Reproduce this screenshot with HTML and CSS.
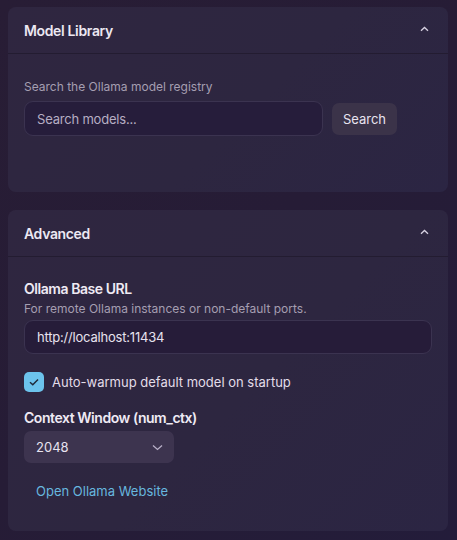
FILE: index.html
```html
<!DOCTYPE html>
<html lang="en">

<head>
    <meta charset="UTF-8">
    <title>Settings</title>
    <link rel="stylesheet" href="styles.css">
</head>

<body>
    <div class="panel">
        <section class="card">
            <div class="card-head">
                <h2>Model Library</h2>
                <svg class="chev" width="9" height="6" viewBox="0 0 9 6"><path d="M1 4.8L4.5 1.5L8 4.8" fill="none" stroke="#d8d2e2" stroke-width="1.3"/></svg>
            </div>
            <div class="card-body lib">
                <p class="hint">Search the Ollama model registry</p>
                <div class="search-row">
                    <input class="field" type="text" placeholder="Search models...">
                    <button class="btn">Search</button>
                </div>
            </div>
        </section>

        <section class="card">
            <div class="card-head">
                <h2>Advanced</h2>
                <svg class="chev" width="9" height="6" viewBox="0 0 9 6"><path d="M1 4.8L4.5 1.5L8 4.8" fill="none" stroke="#d8d2e2" stroke-width="1.3"/></svg>
            </div>
            <div class="card-body adv">
                <div class="group">
                    <label class="label">Ollama Base URL</label>
                    <p class="desc">For remote Ollama instances or non-default ports.</p>
                    <input class="field url" type="text" value="http://localhost:11434">
                </div>
                <label class="check">
                    <span class="box">
                        <svg width="12" height="10" viewBox="0 0 12 10"><path d="M2 5.2L4.8 7.8L10 2.4" fill="none" stroke="#1f2a3a" stroke-width="1.5"/></svg>
                    </span>
                    Auto-warmup default model on startup
                </label>
                <div class="group">
                    <label class="label">Context Window (num_ctx)</label>
                    <div class="select">
                        <span>2048</span>
                        <svg width="11" height="7" viewBox="0 0 11 7"><path d="M1 1.5L5.5 5.5L10 1.5" fill="none" stroke="#b9b0c8" stroke-width="1.3"/></svg>
                    </div>
                </div>
                <a class="link" href="#">Open Ollama Website</a>
            </div>
        </section>
    </div>
</body>

</html>
```

FILE: styles.css
```css
* {
    padding: 0;
    margin: 0;
    box-sizing: border-box;
}

body {
    width: 457px;
    height: 540px;
    overflow: hidden;
    background: linear-gradient(135deg, #281d35 0%, #261c36 50%, #231c3a 100%);
    font-family: Inter, "Noto Sans", sans-serif;
    color: #e9e4f0;
}

.panel {
    padding: 7px 9px 0 8px;
    display: flex;
    flex-direction: column;
    gap: 18px;
}

.card {
    background: linear-gradient(135deg, #2f2640 0%, #2d2640 55%, #2b2543 100%);
    border-radius: 8px;
}

.card-head {
    height: 47px;
    padding: 0 19px 0 16px;
    display: flex;
    align-items: center;
    justify-content: space-between;
    border-bottom: 1px solid #231c31;
}

.card-head h2 {
    font-size: 14px;
    font-weight: 600;
    letter-spacing: -0.35px;
    color: #ece8f2;
}

.chev {
    margin-top: -2px;
}

.card-body {
    padding: 0 16px;
}

.lib {
    padding-top: 25px;
    height: 138px;
}

.hint {
    font-size: 12px;
    color: #a59eb1;
    line-height: 16px;
}

.search-row {
    margin-top: 6px;
    display: flex;
    align-items: center;
    gap: 9px;
}

.field {
    height: 35px;
    border: 1px solid #3b3350;
    border-radius: 9px;
    background: #261d3b;
    padding: 0 12px;
    font-family: inherit;
    font-size: 13px;
    letter-spacing: -0.2px;
    color: #e7e2ee;
    outline: none;
}

.field::placeholder {
    color: #b6aec3;
}

.search-row .field {
    width: 299px;
}

.btn {
    height: 32px;
    width: 65px;
    border: 0;
    border-radius: 7px;
    background: #3b3349;
    color: #e8e3ef;
    font-family: inherit;
    font-size: 13px;
}

.adv {
    padding-top: 23px;
    padding-bottom: 32px;
}

.group {
    display: flex;
    flex-direction: column;
}

.label {
    font-size: 14px;
    font-weight: 600;
    letter-spacing: -0.45px;
    color: #efeaf4;
    line-height: 18px;
}

.desc {
    font-size: 12px;
    color: #a59eb1;
    line-height: 16px;
    margin-top: 3px;
}

.field.url {
    width: 408px;
    height: 34px;
    margin-top: 3px;
    background: #261c39;
}

.check {
    display: flex;
    align-items: center;
    gap: 8px;
    font-size: 13px;
    color: #e3dde9;
    margin: 18px 0 17px;
}

.box {
    width: 20px;
    height: 20px;
    border-radius: 5px;
    background: #6cc3ec;
    display: flex;
    align-items: center;
    justify-content: center;
}

.select {
    margin-top: 4px;
    width: 150px;
    height: 32px;
    border-radius: 7px;
    background: #3d344f;
    display: flex;
    align-items: center;
    justify-content: space-between;
    padding: 0 11px 0 12px;
    font-size: 13px;
    color: #e8e3ef;
}

.link {
    display: block;
    margin: 20px 0 0 12px;
    font-size: 13px;
    color: #67b7df;
    text-decoration: none;
}
```
